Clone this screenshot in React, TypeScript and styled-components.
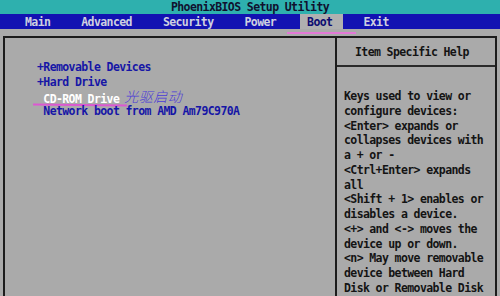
import React from "react";
import styled, { createGlobalStyle } from "styled-components";

const Global = createGlobalStyle`
  html, body { margin: 0; padding: 0; background: #aaaaaa; }
  #root { width: 500px; height: 296px; overflow: hidden; }
`;

const mono = `"DejaVu Sans Mono", "Liberation Mono", monospace`;

const Screen = styled.div`
  width: 500px;
  height: 296px;
  overflow: hidden;
  background: #aaaaaa;
  font-family: ${mono};
  font-weight: bold;
  font-size: 11.5px;
  letter-spacing: -0.6px;
  display: flex;
  flex-direction: column;
`;

const TitleBar = styled.div`
  height: 14px;
  background: #2eb0ae;
  color: #10102e;
  display: flex;
  align-items: center;
  justify-content: center;
  line-height: 14px;
`;

const MenuBar = styled.div`
  height: 15px;
  background: #1212b2;
  display: flex;
  align-items: stretch;
  padding-left: 18px;
  gap: 17px;
`;

const Tab = styled.div<{ $active?: boolean }>`
  position: relative;
  padding: 0 11px 0 7px;
  display: flex;
  align-items: center;
  background: ${(p) => (p.$active ? "#b0b0b0" : "transparent")};
  color: ${(p) => (p.$active ? "#0c0c70" : "#cfd0e0")};
  &:not(:first-child) { margin-left: -4px; }
`;

const TabMark = styled.span`
  position: absolute;
  top: calc(100% + 3px);
  left: -13px;
  width: 69px;
  height: 2px;
  background: #e278d6;
`;

const Frame = styled.div`
  margin: 7px 3px 0 3px;
  flex: 1;
  border: 2px solid #1c1c1c;
  border-bottom: none;
  display: flex;
`;

const LeftPanel = styled.div`
  width: 330px;
  padding: 22px 0 0 32px;
  box-sizing: border-box;
  display: flex;
  flex-direction: column;
`;

const Row = styled.div<{ $selected?: boolean }>`
  position: relative;
  height: 14.8px;
  line-height: 14.8px;
  white-space: pre;
  color: ${(p) => (p.$selected ? "#ffffff" : "#1616a6")};
`;

const Note = styled.span`
  font-family: "Noto Sans CJK SC", sans-serif;
  font-weight: 300;
  font-style: italic;
  font-size: 14px;
  letter-spacing: 0.5px;
  color: #4b3ad6;
  margin-left: 5px;
  position: relative;
  top: -1px;
`;

const RowMark = styled.span`
  position: absolute;
  left: -4px;
  top: 14px;
  width: 94px;
  height: 2px;
  background: #dc58d2;
  transform: rotate(0.6deg);
`;

const RightPanel = styled.div`
  flex: 1;
  border-left: 2px solid #1c1c1c;
  display: flex;
  flex-direction: column;
  color: #141414;
`;

const HelpHeader = styled.div`
  height: 27px;
  border-bottom: 2px solid #2a2a2a;
  display: flex;
  align-items: center;
  padding-left: 18px;
`;

const HelpBody = styled.div`
  padding: 22px 0 0 7px;
  display: flex;
  flex-direction: column;
`;

const HelpLine = styled.div`
  height: 14.75px;
  line-height: 14.75px;
  white-space: pre;
`;

const tabs = ["Main", "Advanced", "Security", "Power", "Boot", "Exit"];

const help = [
  "Keys used to view or",
  "configure devices:",
  "<Enter> expands or",
  "collapses devices with",
  "a + or -",
  "<Ctrl+Enter> expands",
  "all",
  "<Shift + 1> enables or",
  "disables a device.",
  "<+> and <-> moves the",
  "device up or down.",
  "<n> May move removable",
  "device between Hard",
  "Disk or Removable Disk",
];

export default function App() {
  return (
    <>
      <Global />
      <Screen>
        <TitleBar>PhoenixBIOS Setup Utility</TitleBar>
        <MenuBar>
          {tabs.map((t) => (
            <Tab key={t} $active={t === "Boot"}>
              {t}
              {t === "Boot" && <TabMark />}
            </Tab>
          ))}
        </MenuBar>
        <Frame>
          <LeftPanel>
            <Row>+Removable Devices</Row>
            <Row>+Hard Drive</Row>
            <Row $selected>
              {" CD-ROM Drive"}
              <Note>光驱启动</Note>
              <RowMark />
            </Row>
            <Row>{" Network boot from AMD Am79C970A"}</Row>
          </LeftPanel>
          <RightPanel>
            <HelpHeader>Item Specific Help</HelpHeader>
            <HelpBody>
              {help.map((l, i) => (
                <HelpLine key={i}>{l}</HelpLine>
              ))}
            </HelpBody>
          </RightPanel>
        </Frame>
      </Screen>
    </>
  );
}
